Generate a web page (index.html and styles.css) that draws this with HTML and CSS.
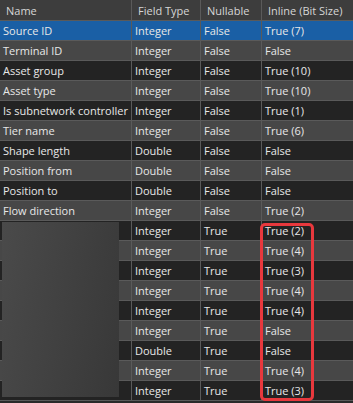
FILE: index.html
```html
<!DOCTYPE html>
<html>
<head>
<meta charset="utf-8">
<link rel="stylesheet" href="styles.css">
</head>
<body>
<div class="grid">
  <div class="row head">
    <div class="c name">Name</div><div class="c type">Field Type</div><div class="c null">Nullable</div><div class="c inl">Inline (Bit Size)</div>
  </div>
  <div class="row sel"><div class="c name">Source ID</div><div class="c type">Integer</div><div class="c null">False</div><div class="c inl">True (7)</div></div>
  <div class="row gray"><div class="c name">Terminal ID</div><div class="c type">Integer</div><div class="c null">False</div><div class="c inl">False</div></div>
  <div class="row dark"><div class="c name">Asset group</div><div class="c type">Integer</div><div class="c null">False</div><div class="c inl">True (10)</div></div>
  <div class="row gray"><div class="c name">Asset type</div><div class="c type">Integer</div><div class="c null">False</div><div class="c inl">True (10)</div></div>
  <div class="row dark"><div class="c name">Is subnetwork controller</div><div class="c type">Integer</div><div class="c null">False</div><div class="c inl">True (1)</div></div>
  <div class="row gray"><div class="c name">Tier name</div><div class="c type">Integer</div><div class="c null">False</div><div class="c inl">True (6)</div></div>
  <div class="row dark"><div class="c name">Shape length</div><div class="c type">Double</div><div class="c null">False</div><div class="c inl">False</div></div>
  <div class="row gray"><div class="c name">Position from</div><div class="c type">Double</div><div class="c null">False</div><div class="c inl">False</div></div>
  <div class="row dark"><div class="c name">Position to</div><div class="c type">Double</div><div class="c null">False</div><div class="c inl">False</div></div>
  <div class="row gray"><div class="c name">Flow direction</div><div class="c type">Integer</div><div class="c null">False</div><div class="c inl">True (2)</div></div>
  <div class="row dark"><div class="c name"></div><div class="c type">Integer</div><div class="c null">True</div><div class="c inl">True (2)</div></div>
  <div class="row gray"><div class="c name"></div><div class="c type">Integer</div><div class="c null">True</div><div class="c inl">True (4)</div></div>
  <div class="row dark"><div class="c name"></div><div class="c type">Integer</div><div class="c null">True</div><div class="c inl">True (3)</div></div>
  <div class="row gray"><div class="c name"></div><div class="c type">Integer</div><div class="c null">True</div><div class="c inl">True (4)</div></div>
  <div class="row dark"><div class="c name"></div><div class="c type">Integer</div><div class="c null">True</div><div class="c inl">True (4)</div></div>
  <div class="row gray"><div class="c name"></div><div class="c type">Integer</div><div class="c null">True</div><div class="c inl">False</div></div>
  <div class="row dark"><div class="c name"></div><div class="c type">Double</div><div class="c null">True</div><div class="c inl">False</div></div>
  <div class="row gray"><div class="c name"></div><div class="c type">Integer</div><div class="c null">True</div><div class="c inl">True (4)</div></div>
  <div class="row dark"><div class="c name"></div><div class="c type">Integer</div><div class="c null">True</div><div class="c inl">True (3)</div></div>
  <div class="blur"></div>
  <div class="mark"></div>
</div>
</body>
</html>
```
FILE: styles.css
```css
html, body {
  margin: 0;
  padding: 0;
  background: #2a2a2a;
  width: 353px;
  height: 403px;
  overflow: hidden;
}
.grid {
  position: relative;
  font-family: "Open Sans", "Noto Sans", sans-serif;
  font-size: 11px;
  color: #e8e8e8;
}
.row {
  display: flex;
  height: 19px;
  border-bottom: 1px solid #5a5a5a;
}
.row.head {
  height: 20px;
  background: #3d3d3d;
  color: #d6d6d6;
}
.row.sel { background: #1a5fa5; }
.row.gray { background: #474747; }
.row.dark { background: #232323; }
.c {
  display: flex;
  align-items: center;
  padding-left: 3px;
  border-right: 1px solid #5a5a5a;
  white-space: nowrap;
  overflow: hidden;
  box-sizing: border-box;
}
.head .c { padding-left: 6px; }
.name { width: 132px; }
.type { width: 69px; }
.null { width: 61px; }
.inl { flex: 1; border-right: none; }
.blur {
  position: absolute;
  left: 2px;
  top: 222px;
  width: 117px;
  height: 175px;
  background: linear-gradient(100deg, #4a4a4a 0%, #424242 45%, #383838 100%);
}
.mark {
  position: absolute;
  left: 260px;
  top: 223px;
  width: 54px;
  height: 178px;
  box-sizing: border-box;
  border: 3.5px solid #e8383d;
  border-radius: 5px;
}
```
